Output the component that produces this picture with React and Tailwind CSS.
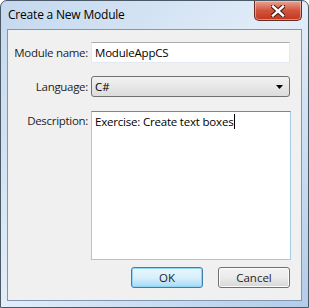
import React from 'react';

const font = { fontFamily: '"Open Sans", "Noto Sans", sans-serif' };

const CloseButton = () => (
  <div className="absolute right-[6px] top-0 w-[48px] h-[20px] rounded-b-[5px] border border-t-0 border-[#6b2a22] bg-gradient-to-b from-[#e8a493] via-[#d0543c] to-[#c3351c] flex items-center justify-center shadow-[inset_0_0_0_1px_rgba(255,220,210,0.5)]">
    <svg width="14" height="12" viewBox="0 0 14 12">
      <path d="M2 1.5 L12 10.5 M12 1.5 L2 10.5" stroke="#4a1a12" strokeWidth="4.5" strokeLinecap="square" />
      <path d="M2 1.5 L12 10.5 M12 1.5 L2 10.5" stroke="#ffffff" strokeWidth="2.4" strokeLinecap="square" />
    </svg>
  </div>
);

const Row = ({ label, children, top = false }) => (
  <div className={`flex ${top ? 'items-start' : 'items-center'}`}>
    <div className={`w-[80px] whitespace-nowrap text-right text-[11.5px] tracking-[-0.3px] text-[#1e1e1e] ${top ? 'pt-[1px]' : ''}`}>{label}</div>
    <div className="ml-[3px]">{children}</div>
  </div>
);

const Button = ({ label, primary }) => (
  <div
    className={`w-[72px] h-[21px] rounded-[3px] border flex items-center justify-center text-[11.5px] text-[#1e1e1e] ${
      primary
        ? 'border-[#3c7fb1] bg-gradient-to-b from-[#eaf6fd] via-[#d9f0fc] to-[#a7d9f5] shadow-[inset_0_0_0_1px_#8fd6f5]'
        : 'border-[#707070] bg-gradient-to-b from-[#f2f2f2] via-[#ebebeb] to-[#d6d6d6] shadow-[inset_0_0_0_1px_#fcfcfc]'
    }`}
  >
    {label}
  </div>
);

export default function App() {
  return (
    <div className="w-[309px] h-[308px] bg-white" style={font}>
      <div className="relative w-[309px] h-[308px] rounded-t-[7px] border border-[#4b5866] bg-gradient-to-br from-[#c4d8ee] via-[#e2edf8] to-[#b3cce8] flex flex-col">
        <div className="h-[28px] pl-[7px] flex items-center text-[12px] tracking-[-0.2px] text-black">Create a New Module</div>
        <CloseButton />
        <div className="mx-[6px] mb-[6px] h-[272px] border border-[#7f97b2] bg-[#f0f0f0] flex flex-col pt-[12px]">
          <Row label="Module name:">
            <div className="w-[199px] h-[21px] bg-white border border-[#e3e9ef] border-t-[#abadb3] flex items-center pl-[3px] text-[11.5px] tracking-[-0.2px] text-black">
              ModuleAppCS
            </div>
          </Row>
          <div className="h-[13px]" />
          <Row label="Language:">
            <div className="w-[199px] h-[21px] rounded-[3px] border border-[#707070] bg-gradient-to-b from-[#f2f2f2] to-[#dcdcdc] flex items-center pl-[3px] pr-[6px] text-[11.5px] text-black">
              <span className="flex-1">C#</span>
              <svg width="7" height="4" viewBox="0 0 7 4">
                <path d="M0 0 H7 L3.5 4 Z" fill="#000" />
              </svg>
            </div>
          </Row>
          <div className="h-[14px]" />
          <Row label="Description:" top>
            <div className="w-[200px] h-[149px] bg-white border border-[#a4c9e3] border-t-[#5e8eb8] pl-[3px] pt-[1px] text-[11.5px] tracking-[-0.2px] text-black flex items-start">
              <span>Exercise: Create text boxes</span>
              <span className="inline-block w-[1px] h-[15px] bg-black ml-[1px] mt-[1px]" />
            </div>
          </Row>
          <div className="flex justify-end gap-[15px] pr-[11px] mt-[7px]">
            <Button label="OK" primary />
            <Button label="Cancel" />
          </div>
        </div>
      </div>
    </div>
  );
}
